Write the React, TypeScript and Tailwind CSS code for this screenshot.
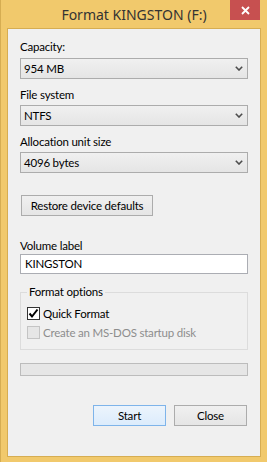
import React from 'react';

const Chevron = () => (
  <svg width="8" height="5" viewBox="0 0 8 5" className="shrink-0">
    <path d="M0.8 0.8 L4 4 L7.2 0.8" fill="none" stroke="#4d4d4d" strokeWidth="1.6" />
  </svg>
);

const Combo = ({ value }: { value: string }) => (
  <div className="flex h-[21px] items-center justify-between border border-[#acacac] bg-gradient-to-b from-[#f0f0f0] to-[#e5e5e5] pl-[3px] pr-[4px]">
    <span>{value}</span>
    <Chevron />
  </div>
);

const Label = ({ children, className = '' }: { children: React.ReactNode; className?: string }) => (
  <div className={`h-[15px] leading-[15px] ${className}`}>{children}</div>
);

export default function App() {
  return (
    <div className="relative h-[462px] w-[267px] overflow-hidden border-l border-[#d6ad52] bg-[#f1c96c] font-['Lato',sans-serif] text-[11.5px] tracking-[-0.2px] text-black">
      {/* Title bar */}
      <div className="flex h-[28px] items-center justify-center pt-[1px] font-['Noto_Sans',sans-serif] text-[14px] tracking-normal text-[#333]">
        Format KINGSTON (F:)
      </div>
      <button className="absolute right-[7px] top-0 flex h-[20px] w-[30px] items-center justify-center bg-[#c75050]">
        <svg width="9" height="9" viewBox="0 0 9 9">
          <path d="M1 1 L8 8 M8 1 L1 8" stroke="#fff" strokeWidth="1.8" />
        </svg>
      </button>

      {/* Client area */}
      <div className="ml-[6px] h-[429px] w-[254px] border border-[#d6ad52] bg-[#f0f0f0] px-[12px] pt-[10px]">
        <Label>Capacity:</Label>
        <div className="mt-[4px]">
          <Combo value="954 MB" />
        </div>

        <Label className="mt-[8px]">File system</Label>
        <div className="mt-[3px]">
          <Combo value="NTFS" />
        </div>

        <Label className="mt-[8px]">Allocation unit size</Label>
        <div className="mt-[3px]">
          <Combo value="4096 bytes" />
        </div>

        <button className="ml-[1px] mt-[22px] flex h-[21px] w-[132px] items-center justify-center whitespace-nowrap border border-[#acacac] bg-gradient-to-b from-[#f0f0f0] to-[#e5e5e5]">
          Restore device defaults
        </button>

        <Label className="mt-[22px]">Volume label</Label>
        <div className="mt-[1px] flex h-[20px] items-center border border-[#abadb3] bg-white pl-[4px]">
          KINGSTON
        </div>

        {/* Format options group */}
        <div className="relative mt-[18px] h-[58px] border border-[#dcdcdc] pl-[6px] pt-[14px]">
          <span className="absolute left-[6px] top-[-9px] bg-[#f0f0f0] px-[2px] leading-[15px]">Format options</span>
          <div className="flex items-center gap-[3px]">
            <span className="flex h-[13px] w-[13px] items-center justify-center border border-[#333] bg-white">
              <svg width="11" height="11" viewBox="0 0 11 11">
                <path d="M1.5 5.5 L4 8.5 L9.5 1.5" fill="none" stroke="#000" strokeWidth="2" />
              </svg>
            </span>
            <span className="leading-[13px]">Quick Format</span>
          </div>
          <div className="mt-[6px] flex items-center gap-[3px] text-[#8d8d8d]">
            <span className="h-[13px] w-[13px] border border-[#c4c4c4] bg-[#e6e6e6]" />
            <span className="leading-[13px]">Create an MS-DOS startup disk</span>
          </div>
        </div>

        {/* Progress bar */}
        <div className="mt-[13px] h-[13px] border border-[#bcbcbc] bg-[#e6e6e6]" />

        {/* Buttons */}
        <div className="mr-[1px] mt-[29px] flex justify-end gap-[8px]">
          <button className="flex h-[21px] w-[73px] items-center justify-center border border-[#7eb4ea] bg-gradient-to-b from-[#ecf4fc] to-[#dcecfc]">
            Start
          </button>
          <button className="flex h-[21px] w-[73px] items-center justify-center border border-[#acacac] bg-gradient-to-b from-[#f0f0f0] to-[#e5e5e5]">
            Close
          </button>
        </div>
      </div>
    </div>
  );
}
